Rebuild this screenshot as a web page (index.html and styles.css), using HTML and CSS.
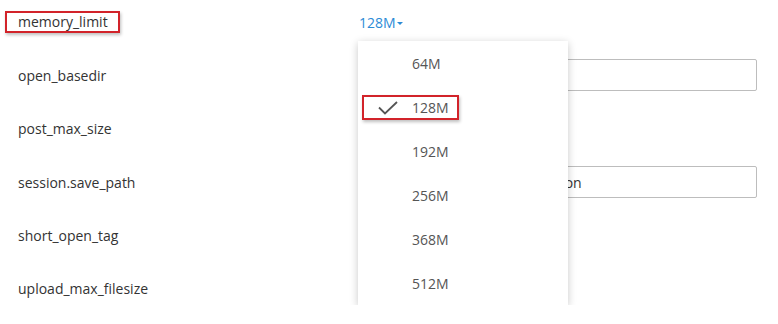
FILE: index.html
```html
<!DOCTYPE html>
<html>
<head>
<meta charset="utf-8">
<link rel="stylesheet" href="styles.css">
</head>
<body>
<div class="form">
  <div class="label"><span class="hl">memory_limit</span></div>
  <div class="field anchor">
    <span class="dd">128M<span class="caret"></span></span>
    <div class="menu">
      <div class="item">64M</div>
      <div class="item selected">
        <span class="hl-item">
          <svg class="check" width="20" height="14" viewBox="0 0 20 14"><path d="M1 6.5 L7 12.5 L19 1" fill="none" stroke="#555" stroke-width="1.8"/></svg>
          <span>128M</span>
        </span>
      </div>
      <div class="item">192M</div>
      <div class="item">256M</div>
      <div class="item">368M</div>
      <div class="item">512M</div>
    </div>
  </div>

  <div class="label">open_basedir</div>
  <div class="field"><div class="input"></div></div>

  <div class="label">post_max_size</div>
  <div class="field"></div>

  <div class="label">session.save_path</div>
  <div class="field"><div class="input">/var/www/vhosts/system/session</div></div>

  <div class="label">short_open_tag</div>
  <div class="field"></div>

  <div class="label">upload_max_filesize</div>
  <div class="field"></div>
</div>
</body>
</html>
```

FILE: styles.css
```css
html, body {
  margin: 0;
  padding: 0;
  background: #fff;
}
body {
  font-family: "Open Sans", "DejaVu Sans", sans-serif;
  font-size: 14px;
  color: #333;
}
.form {
  display: grid;
  grid-template-columns: 359px 398px;
  grid-auto-rows: 32px;
  row-gap: 21.4px;
  padding-top: 6px;
}
.label {
  padding-left: 18px;
  display: flex;
  align-items: center;
}
.hl {
  display: inline-block;
  margin-left: -13px;
  padding: 1px 10px 1px 11px;
  border: 2px solid #d2232a;
  box-shadow: 1px 2px 3px rgba(0,0,0,0.25);
  line-height: 16px;
}
.field {
  display: flex;
  align-items: center;
}
.anchor {
  position: relative;
}
.dd {
  color: #2b8bd6;
  display: inline-flex;
  align-items: center;
}
.caret {
  display: inline-block;
  margin-left: 1px;
  margin-top: 2px;
  width: 0;
  height: 0;
  border-left: 3.5px solid transparent;
  border-right: 3.5px solid transparent;
  border-top: 3.5px solid #2b8bd6;
}
.input {
  box-sizing: border-box;
  width: 398px;
  height: 32px;
  border: 1px solid #bdbdbd;
  border-radius: 2px;
  padding: 0 10px 0 6px;
  display: flex;
  align-items: center;
  color: #333;
  white-space: nowrap;
  overflow: hidden;
}
.menu {
  position: absolute;
  left: -1px;
  top: 35px;
  width: 210px;
  height: 264px;
  background: #fff;
  box-shadow: 0 2px 8px rgba(0,0,0,0.22);
  z-index: 10;
  display: flex;
  flex-direction: column;
}
.item {
  height: 44px;
  flex: none;
  display: flex;
  align-items: center;
  padding-left: 54px;
  color: #555;
}
.item.selected {
  padding-left: 4px;
}
.hl-item {
  display: flex;
  align-items: center;
  box-sizing: border-box;
  width: 97px;
  height: 25px;
  border: 2px solid #d2232a;
  box-shadow: 1px 2px 3px rgba(0,0,0,0.25);
  padding-left: 14px;
}
.check {
  margin-right: 14px;
  margin-top: 2px;
}
```
